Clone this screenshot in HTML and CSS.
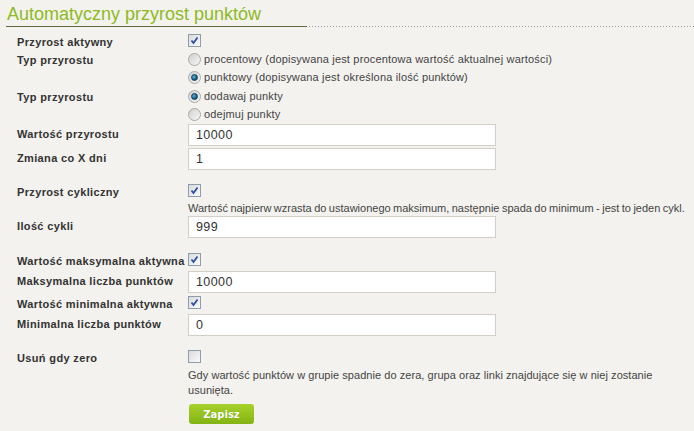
FILE: index.html
```html
<!DOCTYPE html>
<html>
  <head>
    <meta charset="utf-8">
    <title>Automatyczny przyrost punktów</title>
    <link rel="stylesheet" href="styles.css">
  </head>
  <body>
    <h2 class="title"><span>Automatyczny przyrost punktów</span></h2>
    <form class="form">
      <div class="row row-line">
        <label>Przyrost aktywny</label>
        <div class="field">
          <span class="check"><svg viewBox="0 0 11 11"><path d="M2.5 5.5 L4.5 8 L8.5 2.5"/></svg></span>
        </div>
      </div>
      <div class="row">
        <label>Typ przyrostu</label>
        <div class="field">
          <div class="option"><span class="radio"></span>procentowy (dopisywana jest procentowa wartość aktualnej wartości)</div>
          <div class="option"><span class="radio on"></span>punktowy (dopisywana jest określona ilość punktów)</div>
        </div>
      </div>
      <div class="row gap-1">
        <label>Typ przyrostu</label>
        <div class="field">
          <div class="option"><span class="radio on"></span>dodawaj punkty</div>
          <div class="option"><span class="radio"></span>odejmuj punkty</div>
        </div>
      </div>
      <div class="row gap-1">
        <label>Wartość przyrostu</label>
        <div class="field"><input class="text" type="text" value="10000"></div>
      </div>
      <div class="row gap-2">
        <label>Zmiana co X dni</label>
        <div class="field"><input class="text" type="text" value="1"></div>
      </div>
      <div class="row row-line gap-12">
        <label>Przyrost cykliczny</label>
        <div class="field">
          <span class="check"><svg viewBox="0 0 11 11"><path d="M2.5 5.5 L4.5 8 L8.5 2.5"/></svg></span>
          <p class="note note-single">Wartość najpierw wzrasta do ustawionego maksimum, następnie spada do minimum - jest to jeden cykl.</p>
        </div>
      </div>
      <div class="row">
        <label>Ilość cykli</label>
        <div class="field"><input class="text" type="text" value="999"></div>
      </div>
      <div class="row row-line gap-13">
        <label>Wartość maksymalna aktywna</label>
        <div class="field">
          <span class="check"><svg viewBox="0 0 11 11"><path d="M2.5 5.5 L4.5 8 L8.5 2.5"/></svg></span>
        </div>
      </div>
      <div class="row gap-2">
        <label>Maksymalna liczba punktów</label>
        <div class="field"><input class="text" type="text" value="10000"></div>
      </div>
      <div class="row row-line gap-1">
        <label>Wartość minimalna aktywna</label>
        <div class="field">
          <span class="check"><svg viewBox="0 0 11 11"><path d="M2.5 5.5 L4.5 8 L8.5 2.5"/></svg></span>
        </div>
      </div>
      <div class="row gap-2">
        <label>Minimalna liczba punktów</label>
        <div class="field"><input class="text" type="text" value="0"></div>
      </div>
      <div class="row row-line gap-12">
        <label>Usuń gdy zero</label>
        <div class="field">
          <span class="check"></span>
          <p class="note">Gdy wartość punktów w grupie spadnie do zera, grupa oraz linki znajdujące się w niej zostanie usunięta.</p>
          <button class="button" type="button">Zapisz</button>
        </div>
      </div>
    </form>
  </body>
</html>
```

FILE: styles.css
```css
/* page */
body {
  margin: 0;
  background-color: #f3f2ee;
  font-family: "Liberation Sans", Arial, sans-serif;
  font-size: 11px;
  color: #444;
}

/* heading with solid + dotted rule */
.title {
  margin: 0 0 0 6px;
  padding-top: 3px;
  font-size: 18px;
  font-weight: normal;
  line-height: 22px;
  color: #8dba22;
  background: repeating-linear-gradient(to right, #9b9b93 0 1px, transparent 1px 3px) bottom / 100% 1px no-repeat;
}
.title span {
  display: inline-block;
  width: 300px;
  padding-left: 1px;
  padding-bottom: 1px;
  border-bottom: 1px solid #5e6a3c;
  vertical-align: top;
}

/* form rows */
.form {
  margin-top: 5px;
  padding-left: 17px;
}
.row {
  display: grid;
  grid-template-columns: 171px 1fr;
}
.row label {
  padding-top: 3px;
  line-height: 14px;
  font-weight: bold;
  font-size: 11px;
  letter-spacing: 0.35px;
  color: #333;
  white-space: nowrap;
}
.gap-1 { margin-top: 1px; }
.gap-2 { margin-top: 2px; }
.gap-12 { margin-top: 12px; }
.gap-13 { margin-top: 13px; }

.field {
  min-width: 0;
}
.row-line .field > .check {
  margin: 2px 0 3px;
}

/* radios */
.option {
  display: flex;
  align-items: center;
  height: 18px;
  letter-spacing: 0.18px;
}
.radio {
  position: relative;
  flex: none;
  width: 13px;
  height: 13px;
  box-sizing: border-box;
  margin-right: 3px;
  border: 1px solid #a9a9a9;
  border-radius: 50%;
  background: linear-gradient(135deg, #cfcfcf, #f7f7f7);
}
.radio.on:after {
  content: '';
  position: absolute;
  left: 2px;
  top: 2px;
  width: 7px;
  height: 7px;
  box-sizing: border-box;
  border: 1px solid #0d3a58;
  border-radius: 50%;
  background: radial-gradient(circle at 35% 35%, #5cb0dc, #12557f 70%);
}

/* checkbox */
.check {
  display: block;
  width: 13px;
  height: 13px;
  box-sizing: border-box;
  border: 1px solid #8e9cab;
  background: linear-gradient(135deg, #d9dadb, #fbfbfb);
}
.check svg {
  display: block;
  width: 11px;
  height: 11px;
}
.check path {
  fill: none;
  stroke: #2b50a6;
  stroke-width: 1.8;
}

/* text input */
.text {
  display: block;
  width: 308px;
  height: 22px;
  box-sizing: border-box;
  margin: 0;
  padding: 0 7px;
  border: 1px solid #d3cfc7;
  background-color: #fff;
  font-family: "Liberation Sans", Arial, sans-serif;
  font-size: 12.5px;
  letter-spacing: 0.4px;
  color: #333;
  outline: none;
}

/* notes */
.note {
  margin: 0;
  line-height: 15px;
  letter-spacing: 0.05px;
  margin-top: 5px;
}
.note-single {
  margin-top: 1px;
  line-height: 16px;
  letter-spacing: 0;
  word-spacing: -0.6px;
  white-space: nowrap;
}

/* button */
.button {
  display: block;
  width: 65px;
  height: 20px;
  margin: 6px 0 0 1px;
  padding: 0;
  border: 0;
  border-radius: 3px;
  background: linear-gradient(#a8d12c, #82b313);
  font-family: "DejaVu Sans", Verdana, sans-serif;
  font-weight: bold;
  font-size: 10px;
  color: #fff;
  text-shadow: 0 0 1px #6e9a10;
  cursor: pointer;
}
```
